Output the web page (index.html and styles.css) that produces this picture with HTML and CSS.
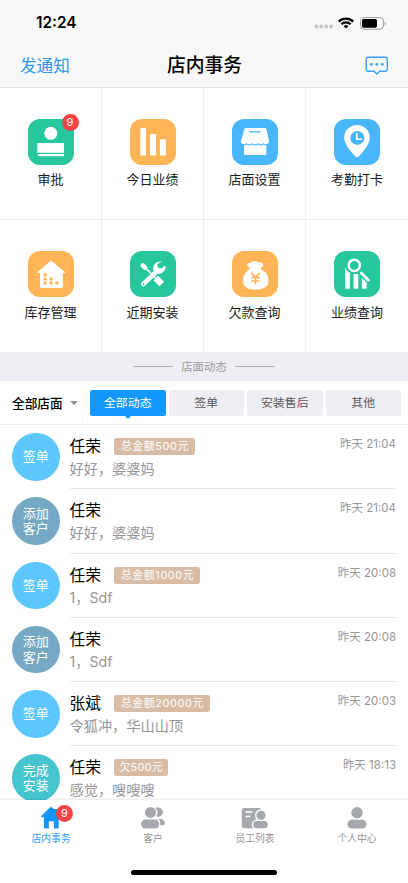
FILE: index.html
```html
<!DOCTYPE html>
<html lang="zh-CN">
<head>
<meta charset="utf-8">
<meta name="viewport" content="width=device-width, initial-scale=1">
<title>店内事务</title>
<link rel="stylesheet" href="styles.css">
</head>
<body>
<div class="app">
  <header class="header">
    <div class="status">
      <span class="clock">12:24</span>
      <div class="signals">
        <svg width="20" height="5" viewBox="0 0 20 5" fill="#c4c4c5"><circle cx="2.4" cy="2.5" r="1.9"/><circle cx="7.3" cy="2.5" r="1.9"/><circle cx="12.2" cy="2.5" r="1.9"/><circle cx="17.1" cy="2.5" r="1.9"/></svg>
        <svg class="wifi" width="16" height="12" viewBox="0 0 16 12" fill="none" stroke="#000" stroke-width="2.3"><path d="M.8 4.6a10.3 10.3 0 0 1 14.4 0"/><path d="M3.4 7.3a6.5 6.5 0 0 1 9.2 0"/><path d="M8 11.6 5.6 9.2a3.4 3.4 0 0 1 4.8 0z" fill="#000" stroke="none"/></svg>
        <svg class="battery" width="27" height="13" viewBox="0 0 27 13"><rect x=".6" y=".6" width="22.8" height="11.6" rx="3.3" fill="#fff" stroke="#999" stroke-width="1"/><rect x="2" y="2" width="15" height="8.8" rx="1.7"/><path d="M24.7 4.4c1.5.5 1.5 3.5 0 4z" fill="#999"/></svg>
      </div>
    </div>
    <div class="nav">
      <a class="nav-action">发通知</a>
      <h1 class="nav-title">店内事务</h1>
      <svg class="nav-chat" width="24" height="20" viewBox="0 0 24 20" fill="none" stroke="#3a9ff5" stroke-width="1.4"><path d="M3 1.2h17.6c1 0 1.700.7 1.700 1.700v10.700c0 1-.7 1.700-1.700 1.700h-6l-2.800 2.800L9 15.300H3c-1 0-1.700-.7-1.700-1.700V2.900c0-1 .7-1.700 1.700-1.700z"/><g fill="#3a9ff5" stroke="none"><circle cx="6.300" cy="8.300" r="1.350"/><circle cx="11.800" cy="8.300" r="1.350"/><circle cx="17.300" cy="8.300" r="1.350"/></g></svg>
    </div>
  </header>

  <section class="tiles">
    <div class="tile">
      <div class="tile-icon green"><svg viewBox="0 0 46 46" fill="#fff"><circle cx="22.800" cy="14.300" r="6.500"/><path d="M9.300 24H36v9.800H9.300zM10 35h26v2.200H10z"/></svg><span class="badge">9</span></div>
      <span class="tile-label">审批</span>
    </div>
    <div class="tile">
      <div class="tile-icon orange"><svg viewBox="0 0 46 46" fill="#fff"><path d="M10.300 9H16v27.500h-5.700zM20.200 15h5.700v21.500h-5.700zM30 20.200h5.800v16.300H30z"/></svg></div>
      <span class="tile-label">今日业绩</span>
    </div>
    <div class="tile">
      <div class="tile-icon blue"><svg viewBox="0 0 46 46"><path fill="#fff" d="M14 9h18.800c.9 0 1.300.4 1.600 1.200L37 22c.3 2-1.300 3.300-3 3.300-1 0-2-.5-2.500-1.300-1.300 1.800-4.500 1.800-5.700 0-1.200 1.800-4.400 1.800-5.600 0-1.200 1.800-4.400 1.800-5.700 0-1.500 2.300-6 1.500-5.500-2l3.400-11.800c.3-.8.700-1.200 1.600-1.200z"/><path fill="#fff" d="M12 26.400c1.100 0 1.900-.4 2.600-.9 1.700 1.300 4 1.300 5.600 0 1.700 1.300 4 1.300 5.600 0 1.700 1.300 4 1.300 5.700 0 .8.600 1.700.9 2.900.9V35q0 1.100-1.100 1.100H13.100Q12 36.100 12 35z"/><path d="M17.500 12.800h11.200" stroke="#49b6fb" stroke-width="1.300"/></svg></div>
      <span class="tile-label">店面设置</span>
    </div>
    <div class="tile">
      <div class="tile-icon blue"><svg viewBox="0 0 46 46"><path fill="#fff" d="M23 6c7.200 0 12.800 5.600 12.800 12.600 0 6.700-6.300 13.700-11.100 18.900q-1.700 1.600-3.400 0c-4.800-5.200-11.100-12.200-11.100-18.900C10.200 11.600 15.800 6 23 6z"/><circle cx="23.300" cy="18.900" r="7" fill="#49b6fb"/><path d="M22.800 14v6.200h5.300" fill="none" stroke="#fff" stroke-width="1.600"/></svg></div>
      <span class="tile-label">考勤打卡</span>
    </div>
    <div class="tile">
      <div class="tile-icon orange"><svg viewBox="0 0 46 46"><path fill="#fff" d="m23 9.500 13.900 11.600q.8.900-.3.900h-1.700v13.600q0 1.400-1.400 1.400h-20q-1.500 0-1.500-1.400V22h-2q-1.100 0-.2-.9z"/><path fill="#ffb457" d="M15.600 22.300h3.100v3.100h-3.100zM15.600 26.400h3.100v3.100h-3.100zM15.600 30.400h3.100v3.100h-3.100zM21.500 26.400h3.100v3.100h-3.100zM21.500 30.400h3.100v3.100h-3.100zM27.400 30.400h3.100v3.100h-3.100z"/></svg></div>
      <span class="tile-label">库存管理</span>
    </div>
    <div class="tile">
      <div class="tile-icon green"><svg viewBox="0 0 46 46"><g fill="none" stroke="#fff"><path d="m14 15.500 13 13" stroke-width="1.700"/><path d="m12.800 14.400 2.200 2.200" stroke-width="4.600" stroke-linecap="round"/><path d="m25.800 27.200 6 5.800" stroke-width="6.500"/><path d="m13.300 33 13.500-12.700" stroke-width="4.500" stroke-linecap="round"/></g><path fill="#fff" d="M32.300 10.800c-6-1.700-10.700 4-8.500 9.600 2.500 4.300 10.300 3.100 12-4.200l-1.100-1.600-3 2.800-3.500-.7-1.100-3.200 2.500-2z"/><circle cx="13.500" cy="33" r="1" fill="#26c79c"/></svg></div>
      <span class="tile-label">近期安装</span>
    </div>
    <div class="tile">
      <div class="tile-icon orange"><svg viewBox="0 0 46 46"><path fill="#fff" d="M17.300 16.600c-4-2.200-1.500-6 1.800-4.800 1-2.200 6.500-2.200 7.600 0 4-1.400 6.600 2.700 2.300 5-.8 1-.1 1.400 1 2 4.500 2.500 6.800 6.300 6.500 11-.2 6-5.500 9-13.100 9s-12.500-3-12.500-9c0-4.700 2.300-8.500 6.200-11 1-.7 1.200-1.300.2-2.200z"/><path d="m19.300 21.700 4.200 4.800 4.200-4.800M23.500 26.500v6.800M19.200 26.700h8.600M19.200 30h8.600" fill="none" stroke="#ffb457" stroke-width="1.700"/></svg></div>
      <span class="tile-label">欠款查询</span>
    </div>
    <div class="tile">
      <div class="tile-icon green"><svg viewBox="0 0 46 46"><path fill="#fff" d="M11 16.200c1.300 3 2.800 4.500 5 5.800v15q0 .8-.8.800h-3.400q-.8 0-.8-.8zM19.500 22.900h4.800V37q0 .8-.8.800h-3.200q-.8 0-.8-.8zM27.900 24.500l4.800 5.200V37q0 .8-.8.800h-3.200q-.8 0-.8-.8z"/><circle cx="20.300" cy="14.300" r="5.600" fill="#26c79c" stroke="#fff" stroke-width="2.500"/><path d="m26.900 22.600 7.500 7.200" stroke="#26c79c" stroke-width="5" stroke-linecap="round"/><path d="m27.300 22 7.200 7.200" stroke="#fff" stroke-width="2.800" stroke-linecap="round"/></svg></div>
      <span class="tile-label">业绩查询</span>
    </div>
  </section>

  <div class="section-title"><span>店面动态</span></div>

  <div class="filters">
    <div class="store">全部店面<i class="caret"></i></div>
    <div class="chips">
      <span class="chip active">全部动态</span>
      <span class="chip">签单</span>
      <span class="chip">安装售后</span>
      <span class="chip">其他</span>
    </div>
  </div>

  <main class="feed">
    <article class="item">
      <div class="avatar sky">签单</div>
      <div class="body"><div class="line"><b class="name">任荣</b><span class="tag">总金额500元</span><time>昨天 21:04</time></div><p>好好，婆婆妈</p></div>
    </article>
    <article class="item">
      <div class="avatar slate">添加<br>客户</div>
      <div class="body"><div class="line"><b class="name">任荣</b><time>昨天 21:04</time></div><p>好好，婆婆妈</p></div>
    </article>
    <article class="item">
      <div class="avatar sky">签单</div>
      <div class="body"><div class="line"><b class="name">任荣</b><span class="tag">总金额1000元</span><time>昨天 20:08</time></div><p>1，Sdf</p></div>
    </article>
    <article class="item">
      <div class="avatar slate">添加<br>客户</div>
      <div class="body"><div class="line"><b class="name">任荣</b><time>昨天 20:08</time></div><p>1，Sdf</p></div>
    </article>
    <article class="item">
      <div class="avatar sky">签单</div>
      <div class="body"><div class="line"><b class="name">张斌</b><span class="tag">总金额20000元</span><time>昨天 20:03</time></div><p>令狐冲，华山山顶</p></div>
    </article>
    <article class="item">
      <div class="avatar teal">完成<br>安装</div>
      <div class="body"><div class="line"><b class="name">任荣</b><span class="tag debt">欠500元</span><time>昨天 18:13</time></div><p>感觉，嗖嗖嗖</p></div>
    </article>
  </main>

  <footer class="tabbar">
    <nav class="tabs">
      <div class="tab current">
        <div class="tab-icon"><svg width="28" height="24" viewBox="0 0 28 24" fill="#1296fb"><path d="M13.200 1.300q.8-.6 1.600 0l2.500 2.100V3h3v3l3.400 4.100q.6 1.200-.6 1.200h-1.400v10q0 1.300-1.300 1.300h-3.500v-6.300q0-1-1-1h-3.100q-1 0-1 1v6.300H8.200q-1.300 0-1.300-1.300v-10H4.700q-1.200 0-.4-1.200z"/></svg><span class="badge">9</span></div>
        <span>店内事务</span>
      </div>
      <div class="tab">
        <div class="tab-icon"><svg width="28" height="24" viewBox="0 0 28 24" fill="#a5a9ad"><path d="M16.500 2c4-1.700 8.300 1.100 7.300 5.300-.4 1.700-1.700 3.100-4.300 3.700-1.300 0-2-.7-1.700-1.500 1.400-2.400.9-5.500-1.300-7.500zM19.500 13h2.700c3.300 0 5.300 5.800 2 6.300h-2.500q-.5 0-.5-.9c0-2.300-.4-3.500-1.700-5.400z"/><circle cx="11.500" cy="6.400" r="5.500"/><rect x="2.200" y="13.500" width="18" height="9.100" rx="4.400"/></svg></div>
        <span>客户</span>
      </div>
      <div class="tab">
        <div class="tab-icon"><svg width="28" height="24" viewBox="0 0 28 24"><rect x=".8" y="2" width="20" height="20.300" rx="2.500" fill="#a5a9ad"/><path d="M4.500 6h7M4.500 10.500h5" stroke="#fff" stroke-width="1.300"/><g fill="#a5a9ad" stroke="#fff" stroke-width="1.400"><rect x="11.500" y="14.300" width="16" height="8.700" rx="4.200"/><circle cx="20" cy="9.300" r="5.300"/></g></svg></div>
        <span>员工列表</span>
      </div>
      <div class="tab">
        <div class="tab-icon"><svg width="28" height="24" viewBox="0 0 28 24" fill="#a5a9ad"><circle cx="14" cy="6.700" r="5.700"/><rect x="4.500" y="13.700" width="19" height="8.900" rx="4.400"/></svg></div>
        <span>个人中心</span>
      </div>
    </nav>
    <div class="home-bar"></div>
  </footer>
</div>
</body>
</html>
```
FILE: styles.css
```css
* { box-sizing: border-box; }

body {
  margin: 0;
  background: #fff;
  color: #111;
  font-family: Inter, "Noto Sans CJK SC", sans-serif;
}

.app {
  display: flex;
  flex-direction: column;
  width: 408px;
  height: 883px;
  overflow: hidden;
}

svg { display: block; }

/* Header */
.header {
  flex: none;
  height: 88px;
  background: #f8f8f8;
  border-bottom: 1px solid #e1e1e2;
}
.status {
  display: flex;
  justify-content: space-between;
  align-items: center;
  height: 44px;
  padding: 2px 21px 0 36px;
}
.clock { font-size: 15.300px; font-weight: 600; line-height: 20px; color: #000; }
.signals { display: flex; align-items: center; }
.signals > :first-child { margin-top: 7px; }
.wifi { margin: 0 6px 0 4px; }
.nav {
  display: grid;
  grid-template-columns: 1fr auto 1fr;
  align-items: center;
  height: 43px;
  padding: 0 19px 0 20px;
}
.nav-action { font-size: 16.6px; line-height: 24px; color: #2d9bf3; }
.nav-title { margin: 0; font-size: 18.8px; line-height: 26px; font-weight: 500; color: #000; }
.nav-chat { justify-self: end; }

/* Shortcuts */
.tiles {
  flex: none;
  display: grid;
  grid-template-columns: repeat(4, 1fr);
  grid-auto-rows: 132px;
}
.tile {
  display: flex;
  flex-direction: column;
  align-items: center;
  padding-top: 31px;
  border-right: 1px solid #efeff1;
  border-bottom: 1px solid #efeff1;
}
.tile:nth-child(4n) { border-right: 0; }
.tile:nth-child(n+5) { border-bottom: 0; }
.tile-icon { position: relative; width: 46px; height: 46px; border-radius: 12px; }
.green { background: #26c79c; }
.orange { background: #ffb457; }
.blue { background: #49b6fb; }
.tile-label { margin-top: 5px; font-size: 13px; line-height: 18px; color: #1c1c1c; }
.tile:nth-child(n+5) .tile-label { margin-top: 6px; }

.badge {
  position: absolute;
  top: -5px;
  right: -5px;
  width: 17px;
  height: 17px;
  border-radius: 50%;
  background: #fb4245;
  color: #fff;
  font-size: 11px;
  line-height: 17px;
  text-align: center;
}

/* Section heading */
.section-title {
  flex: none;
  display: flex;
  justify-content: center;
  align-items: center;
  gap: 8px;
  height: 29px;
  background: #efeef4;
  color: #9a9a9d;
  font-size: 11.4px;
  line-height: 16px;
}
.section-title::before,
.section-title::after { content: ""; width: 39px; height: 1px; background: #adadb1; }

/* Filters */
.filters { flex: none; display: flex; height: 44px; border-bottom: 1px solid #ebebed; }
.store {
  display: flex;
  align-items: center;
  gap: 7px;
  width: 83px;
  padding-left: 12px;
  border-right: 1px solid #f7f7f8;
  font-size: 12.7px;
  font-weight: 500;
  white-space: nowrap;
  color: #000;
}
.caret { border: 4px solid transparent; border-top-color: #919191; border-bottom: 0; }
.chips {
  flex: 1;
  display: grid;
  grid-template-columns: repeat(4, 1fr);
  gap: 3px;
  padding: 9px 7px 8px;
}
.chip {
  position: relative;
  height: 26px;
  border-radius: 2px;
  background: #efeef4;
  color: #59595b;
  font-size: 11.900px;
  line-height: 26px;
  text-align: center;
}
.chip.active { background: #1398ff; color: #fff; }
.chip.active::after {
  content: "";
  position: absolute;
  top: 26px;
  left: 50%;
  margin-left: -3px;
  border: 3px solid transparent;
  border-top-color: #1398ff;
  border-bottom: 0;
}

/* Feed */
.feed { flex: 1; min-height: 0; overflow: hidden; }
.item { display: flex; gap: 10px; height: 64.3px; padding: 0 12px; }
.avatar {
  flex: none;
  display: flex;
  align-items: center;
  justify-content: center;
  width: 47.500px;
  height: 47.500px;
  margin-top: 8px;
  border-radius: 50%;
  color: #fff;
  font-size: 13px;
  line-height: 15.500px;
  text-align: center;
}
.sky { background: #5bc7fd; }
.slate { background: #75a8c3; }
.teal { background: #47c5cf; }
.body { flex: 1; padding-top: 10px; border-bottom: 1px solid #e9e9eb; }
.line { display: flex; align-items: center; height: 23px; }
.name { font-size: 15.700px; line-height: 23px; font-weight: 400; color: #000; }
.tag {
  margin-left: 13px;
  padding: 0 6px 0 7px;
  border-radius: 2.500px;
  background: #d9bca5;
  color: #fff;
  font-size: 10.900px;
  letter-spacing: .6px;
  line-height: 17px;
}
.tag.debt { padding: 0 5px 0 5.500px; letter-spacing: .3px; }
time { align-self: flex-start; margin: 0 0 0 auto; font-size: 11.500px; line-height: 18px; color: #969698; }
.body p { margin: 0; font-size: 14.200px; line-height: 22px; color: #969698; }

/* Tab bar */
.tabbar {
  flex: none;
  position: relative;
  display: flex;
  flex-direction: column;
  align-items: center;
  height: 83px;
  background: #fff;
  box-shadow: 0 -1px 2px rgba(0, 0, 0, .1);
}
.tabs { display: grid; grid-template-columns: repeat(4, 1fr); width: 100%; height: 70px; }
.tab {
  display: flex;
  flex-direction: column;
  align-items: center;
  padding-top: 6px;
  color: #929294;
  font-size: 9.800px;
  line-height: 14px;
}
.tab-icon { position: relative; height: 26px; }
.tab.current { color: #2d9bf3; }
.tab .badge { top: -1px; right: -8px; }
.home-bar { width: 146px; height: 5px; border-radius: 3px; background: #000; }
```
